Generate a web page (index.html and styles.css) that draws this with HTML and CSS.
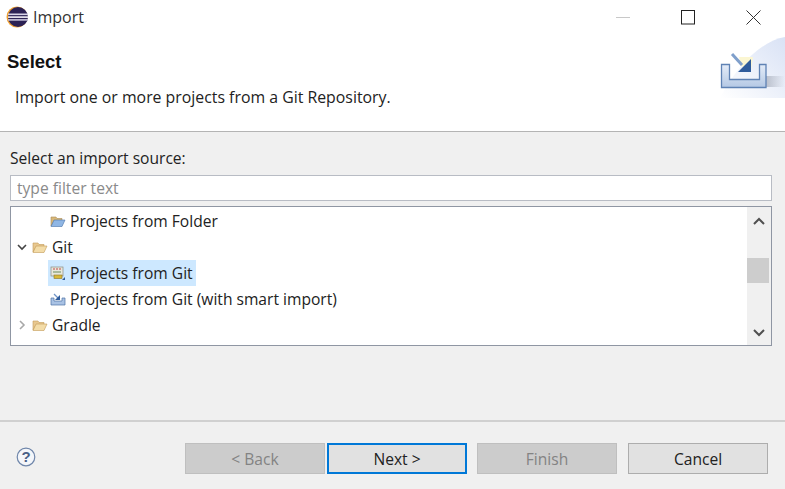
FILE: index.html
```html
<!DOCTYPE html>
<html>
<head>
	<title>Import</title>
	<link rel="stylesheet" href="styles.css">
</head>
<body>

<div class="dialog">
  <div class="titlebar">
    <svg class="app-icon" width="23" height="22" viewBox="0 0 23 22">
      <circle cx="11" cy="11" r="10.5" fill="#f0a030"/>
      <circle cx="12" cy="11" r="10" fill="#2c2255"/>
      <rect x="2" y="7.5" width="20" height="1.6" fill="#d8d4e8"/>
      <rect x="2" y="10.3" width="20" height="1.6" fill="#f4f2fa"/>
      <rect x="2" y="13.1" width="20" height="1.6" fill="#c8c4dc"/>
    </svg>
    <span class="title">Import</span>
    <div class="winbtns">
      <svg width="14" height="14" viewBox="0 0 14 14"><path d="M0 7.5h14" stroke="#c8c8c8" fill="none"/></svg>
      <svg width="14" height="15" viewBox="0 0 14 15"><rect x=".5" y=".5" width="13" height="13.5" stroke="#222" fill="none"/></svg>
      <svg width="15" height="15" viewBox="0 0 15 15"><path d="M.5.5l14 14M14.5.5l-14 14" stroke="#333" fill="none"/></svg>
    </div>
  </div>

  <div class="banner">
    <div class="banner-text">
      <h1>Select</h1>
      <p>Import one or more projects from a Git Repository.</p>
    </div>
    <svg class="banner-icon" width="66" height="62" viewBox="0 0 66 62">
      <defs>
        <linearGradient id="wash" x1="0" y1="1" x2="1" y2="0">
          <stop offset="0" stop-color="#fff"/>
          <stop offset="1" stop-color="#d9e2f5"/>
        </linearGradient>
        <linearGradient id="tray" x1="0" y1="0" x2="0" y2="1">
          <stop offset="0" stop-color="#e4ecf8"/>
          <stop offset="1" stop-color="#b4c8e4"/>
        </linearGradient>
        <linearGradient id="shade" x1="0" y1="0" x2="1" y2="0">
          <stop offset="0" stop-color="#b9bfcc"/>
          <stop offset="1" stop-color="#b9bfcc" stop-opacity="0"/>
        </linearGradient>
      </defs>
      <path d="M66 1C40 5 15 35 1 62H66Z" fill="url(#wash)"/>
      <path d="M47 40H66V51H47Z" fill="url(#shade)"/>
      <path d="M2.5 28.500H10.500V43.500H40.500V28.500H47V51.500H2.500Z" fill="url(#tray)" stroke="#5f82b4" stroke-width="1.300"/>
      <path d="M20 21L34 21L32 34L22 30Z" fill="#fbf6d2"/>
      <path d="M13 18L23 29" stroke="#7f9fcb" stroke-width="3" fill="none"/>
      <path d="M32 23V36H19Z" fill="#2f5c9c"/>
    </svg>
  </div>

  <div class="content">
    <label class="source-label">Select an import source:</label>
    <input class="filter" type="text" placeholder="type filter text">

    <div class="tree">
      <ul class="rows">
        <li class="row depth2">
          <svg class="icon" width="16" height="14" viewBox="0 0 16 14"><path d="M1 3h5l1 1.500h5V7H4L1 12Z" fill="#d9b878" stroke="#a98c58" stroke-width=".6"/><path d="M4 6h11l-3 6.500H1Z" fill="#8fb6e4" stroke="#4a74aa" stroke-width=".6"/></svg>
          <span class="label">Projects from Folder</span>
        </li>
        <li class="row">
          <svg class="twist" width="10" height="10" viewBox="0 0 10 10"><path d="M1 3l4 4 4-4" stroke="#444" stroke-width="1.600" fill="none"/></svg>
          <svg class="icon" width="16" height="14" viewBox="0 0 16 14"><path d="M1 3h5l1 1.500h5V7H4L1 12Z" fill="#e8c890" stroke="#c29a58" stroke-width=".6"/><path d="M4 6h11l-3 6.500H1Z" fill="#f3dca8" stroke="#c29a58" stroke-width=".6"/></svg>
          <span class="label">Git</span>
        </li>
        <li class="row depth2 has-selection">
          <span class="selected">
            <svg class="icon" width="16" height="16" viewBox="0 0 16 16"><rect x="1" y="2" width="12" height="9" fill="#e8e8dc" stroke="#8a8a80" stroke-width=".7"/><path d="M3 4h2M6 4h2M9 4h2" stroke="#c04848"/><path d="M3 7h8" stroke="#6a8a5a"/><rect x="4" y="10" width="8" height="3.500" fill="#d8b838" stroke="#8a7428" stroke-width=".6"/><path d="M12 15h3v-3Z" fill="#2f5c9c"/></svg>
            <span class="label">Projects from Git</span>
          </span>
        </li>
        <li class="row depth2">
          <svg class="icon" width="16" height="14" viewBox="0 0 16 14"><path d="M1 6H4V9H12V6H15V13H1Z" fill="#a9c2e4" stroke="#4f74a8" stroke-width=".7"/><path d="M4 2L8 6" stroke="#6f93c6" stroke-width="1.200"/><path d="M10 3V8H5Z" fill="#2f5c9c"/></svg>
          <span class="label">Projects from Git (with smart import)</span>
        </li>
        <li class="row">
          <svg class="twist" width="10" height="10" viewBox="0 0 10 10"><path d="M3 1l4 4-4 4" stroke="#a8a8a8" stroke-width="1.600" fill="none"/></svg>
          <svg class="icon" width="16" height="14" viewBox="0 0 16 14"><path d="M1 3h5l1 1.500h5V7H4L1 12Z" fill="#e8c890" stroke="#c29a58" stroke-width=".6"/><path d="M4 6h11l-3 6.500H1Z" fill="#f3dca8" stroke="#c29a58" stroke-width=".6"/></svg>
          <span class="label">Gradle</span>
        </li>
      </ul>
      <div class="scrollbar">
        <svg width="12" height="8" viewBox="0 0 12 8"><path d="M1 7l5-5 5 5" stroke="#505050" stroke-width="2" fill="none"/></svg>
        <div class="thumb-track"><div class="thumb"></div></div>
        <svg width="12" height="8" viewBox="0 0 12 8"><path d="M1 1l5 5 5-5" stroke="#505050" stroke-width="2" fill="none"/></svg>
      </div>
    </div>
  </div>

  <div class="footer">
    <svg class="help" width="20" height="20" viewBox="0 0 20 20">
      <circle cx="10" cy="10" r="8.800" fill="#f4f6fa" stroke="#6f86aa" stroke-width="1.200"/>
      <text x="10" y="15" text-anchor="middle" class="help-mark">?</text>
    </svg>
    <div class="buttons">
      <button class="btn" disabled>&lt; Back</button>
      <button class="btn default">Next &gt;</button>
      <button class="btn finish" disabled>Finish</button>
      <button class="btn cancel">Cancel</button>
    </div>
  </div>
</div>

</body>
</html>
```

FILE: styles.css
```css
html, body {
    margin: 0;
    padding: 0;
}

body {
    font-family: "Open Sans", "Noto Sans", sans-serif;
    font-size: 15.6px;
    color: #222;
    background: #f0f0f0;
}

.dialog {
    width: 785px;
    height: 489px;
    display: flex;
    flex-direction: column;
    overflow: hidden;
}

.titlebar {
    height: 36px;
    display: flex;
    align-items: center;
    padding: 0 0 2px 6px;
    background: #fff;
    box-sizing: border-box;
}

.title {
    margin-left: 4px;
    font-size: 16px;
    color: #333;
}

.winbtns {
    margin-left: auto;
    margin-right: 24px;
    display: flex;
    align-items: center;
    gap: 51px;
}

.banner {
    height: 96px;
    display: flex;
    justify-content: space-between;
    align-items: flex-end;
    box-sizing: border-box;
    background: #fff;
    border-bottom: 1px solid #b4b4b4;
}

.banner-text {
    align-self: flex-start;
    padding-left: 7px;
}

.banner-text h1 {
    margin: 13px 0 0;
    font-family: "Liberation Sans", sans-serif;
    font-size: 18.5px;
    line-height: 26px;
    font-weight: 700;
    color: #111;
}

.banner-text p {
    margin: 12px 0 0 8px;
    font-size: 15.85px;
    line-height: 20px;
}

.banner-icon {
    margin-bottom: 33px;
}

.content {
    padding: 0 13px 0 10px;
    display: flex;
    flex-direction: column;
}

.source-label {
    margin-top: 16px;
    line-height: 21px;
}

.filter {
    margin-top: 6px;
    height: 26px;
    padding: 0 6px;
    box-sizing: border-box;
    border: 1px solid #b8bcc4;
    background: #fff;
    font: inherit;
    outline: none;
}

.filter::placeholder {
    color: #8a8a8a;
}

.tree {
    margin-top: 5px;
    height: 140px;
    box-sizing: border-box;
    border: 1px solid #8f96a3;
    background: #fff;
    display: flex;
}

.rows {
    list-style: none;
    flex: 1;
    margin: 1px 0 0;
    padding: 0;
}

.row {
    height: 26px;
    display: flex;
    align-items: center;
    padding-left: 6px;
}

.row.depth2 {
    padding-left: 39px;
}

.row.has-selection {
    padding-left: 37px;
}

.twist {
    margin-right: 5px;
}

.icon {
    margin-right: 4px;
    flex: none;
}

.label {
    white-space: nowrap;
}

.selected {
    display: flex;
    align-items: center;
    height: 26px;
    padding: 0 3px 0 2px;
    background: #cde8ff;
}

.scrollbar {
    width: 24px;
    display: flex;
    flex-direction: column;
    align-items: center;
    justify-content: space-between;
    padding: 10px 0 8px;
    box-sizing: border-box;
    background: #f0f0f0;
}

.thumb-track {
    flex: 1;
    width: 100%;
}

.thumb {
    width: 22px;
    height: 25px;
    margin-top: 33px;
    background: #cdcdcd;
}

.footer {
    margin-top: 74px;
    border-top: 2px solid #d0d0d0;
    padding: 21px 17px 0 16px;
    display: flex;
    align-items: center;
    justify-content: space-between;
}

.help {
    margin-bottom: 3px;
}

.help-mark {
    font-family: "Liberation Sans", sans-serif;
    font-size: 15px;
    font-weight: 700;
    fill: #4a5f86;
}

.buttons {
    display: flex;
    gap: 2px;
}

.btn {
    width: 140px;
    height: 31px;
    box-sizing: border-box;
    border: 1px solid #adadad;
    background: #e1e1e1;
    font: inherit;
    color: #222;
    padding: 0;
}

.btn:disabled {
    background: #cccccc;
    border-color: #bfbfbf;
    color: #838383;
}

.btn.default {
    border: 2px solid #0078d7;
}

.btn.finish {
    margin-left: 8px;
}

.btn.cancel {
    margin-left: 9px;
}
```
